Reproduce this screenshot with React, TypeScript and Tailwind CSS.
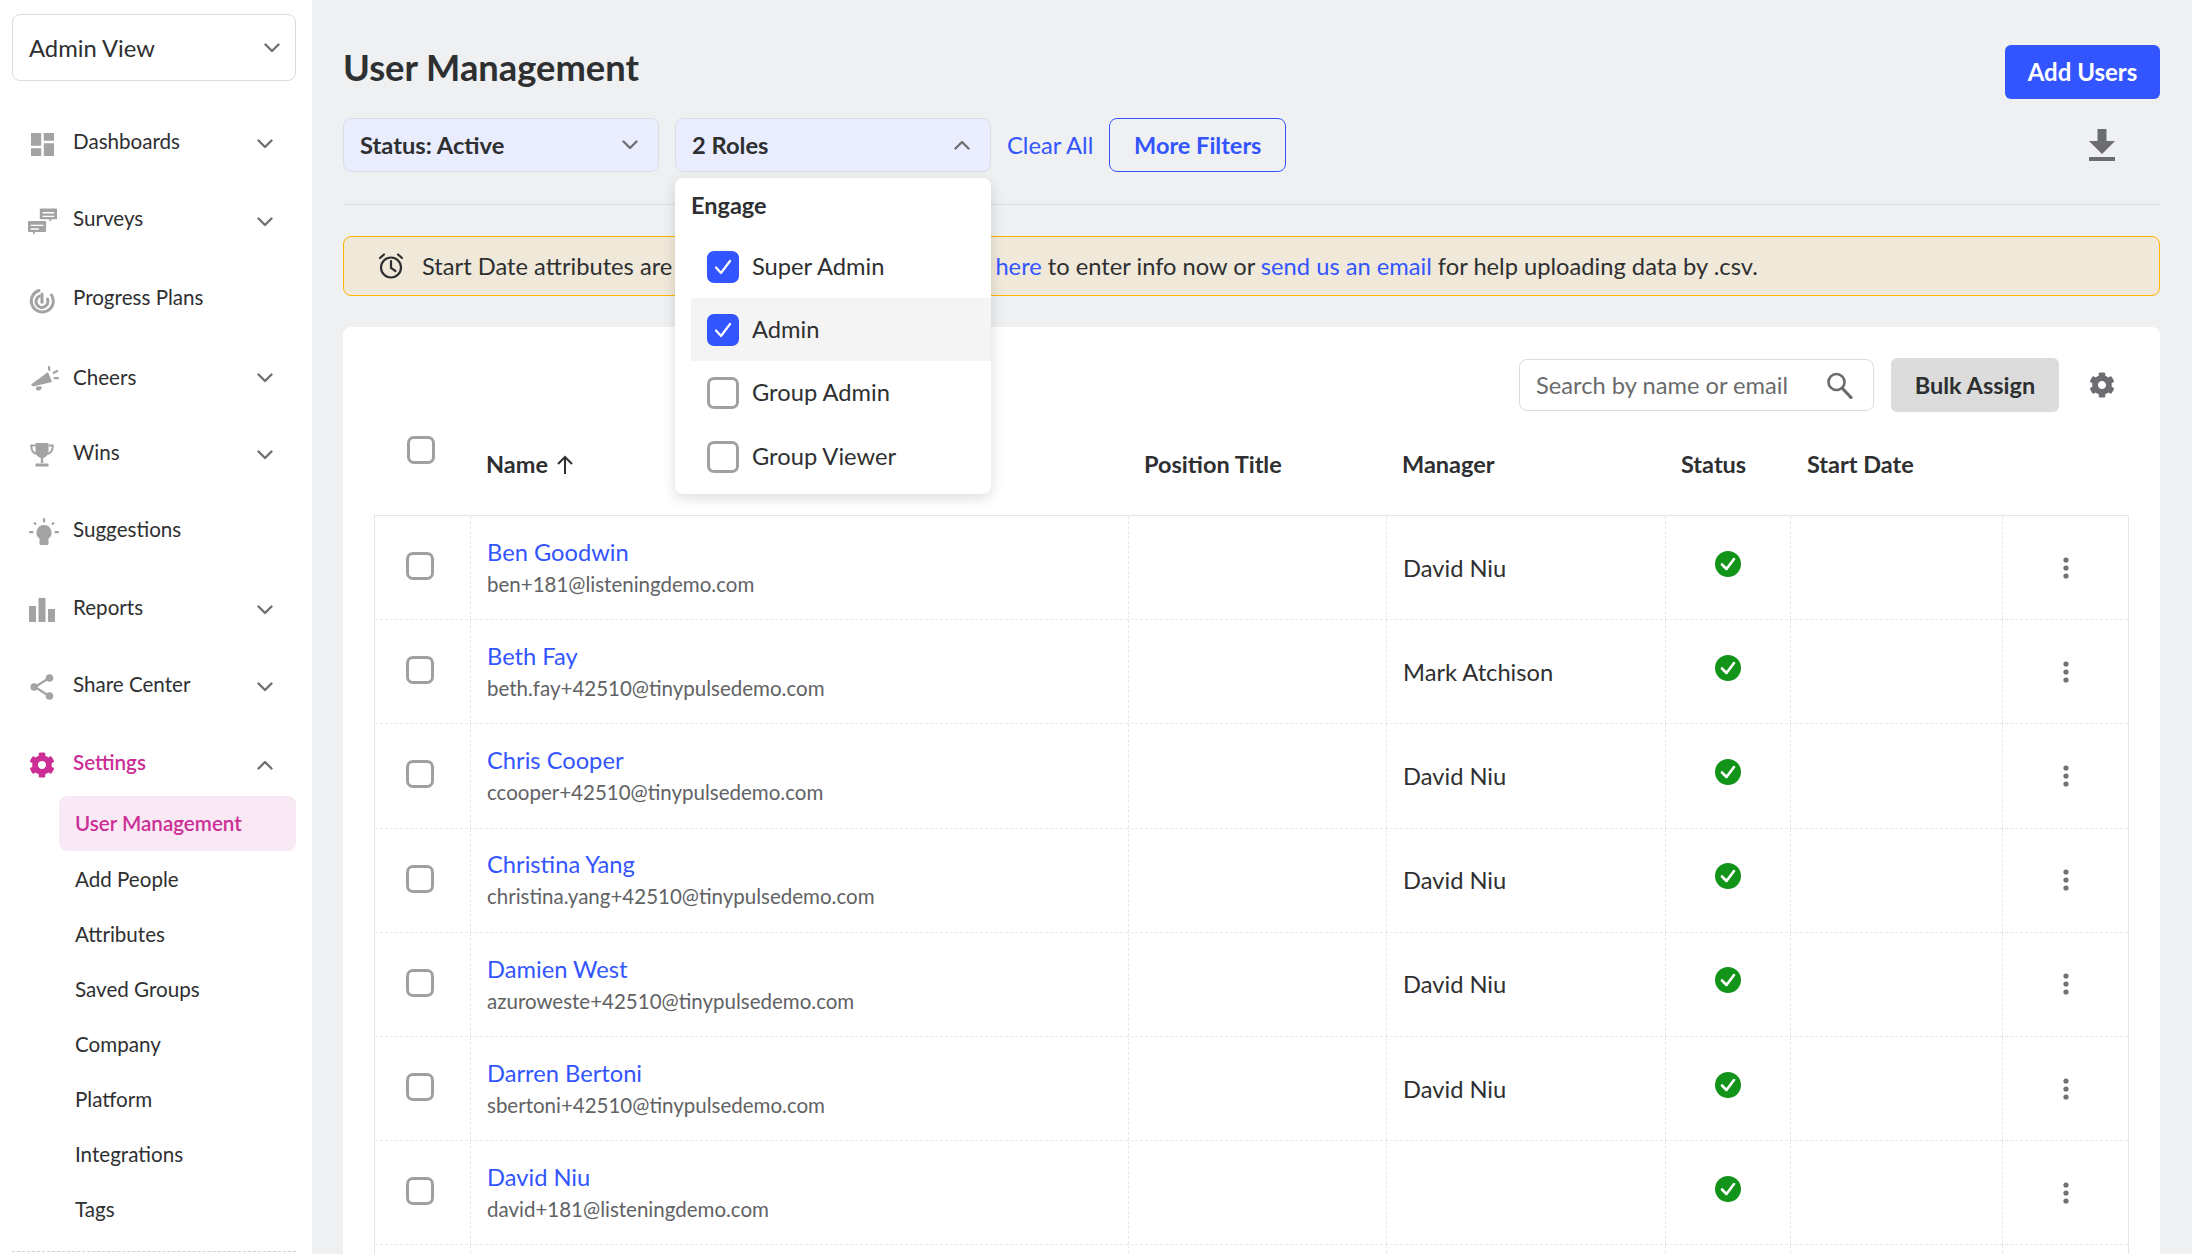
import React from "react";
import { FaCog } from "react-icons/fa";

const Chevron = ({ up = false, className = "" }: { up?: boolean; className?: string }) => (
  <svg viewBox="0 0 16 10" className={className} fill="none" stroke="#6f7072" strokeWidth="2.4" strokeLinecap="round" strokeLinejoin="round">
    {up ? <path d="M1.5 8.5 8 2l6.5 6.5" /> : <path d="M1.5 1.5 8 8l6.5-6.5" />}
  </svg>
);

const G = "#a3a3a3";
const DashboardIcon = () => (
  <svg viewBox="3 3 18 18" className="w-[23px] h-[23px]" fill={G}><path d="M3 13h8V3H3v10zm0 8h8v-6H3v6zm10 0h8V11h-8v10zm0-18v6h8V3h-8z" /></svg>
);
const SurveyIcon = () => (
  <svg viewBox="0 0 32 30" className="w-[32px] h-[30px] ml-[1px]" fill={G}>
    <path fillRule="evenodd" d="M13 1a1 1 0 0 1 1-1h17a1 1 0 0 1 1 1v10a1 1 0 0 1-1 1h-5l-1.5 3-1.500-3H14a1 1 0 0 1-1-1V1zm3 3v1.500h13V4H16zm0 4v1.500h13V8H16z" />
    <path fillRule="evenodd" d="M0 15a1 1 0 0 1 1-1h18a1 1 0 0 1 1 1v10a1 1 0 0 1-1 1H8l-1.500 3L5 26H1a1 1 0 0 1-1-1V15zm3 3v1.500h14V18H3zm0 4v1.500h9V22H3z" />
  </svg>
);
const ProgressIcon = () => (
  <svg viewBox="0 0 26 26" className="w-[26px] h-[26px]" fill="none" stroke={G} strokeWidth="3">
    <path d="M10 2.500A11 11 0 1 0 22.500 7" strokeLinecap="round" />
    <path d="M10.500 8A6 6 0 1 0 18.500 11" strokeLinecap="round" />
    <path d="M13 6v8" strokeLinecap="round" />
    <circle cx="13" cy="14" r="1.500" fill={G} stroke="none" />
  </svg>
);
const CheerIcon = () => (
  <svg viewBox="0 0 30 26" className="w-[30px] h-[26px] ml-[6px] shrink-0" fill={G}>
    <path d="M18 7 22 17 3 21.500 1 19.500z" />
    <path d="M7 21.500h5l-.8 2.500a3 3 0 0 1-5.500-.5z" />
    <rect x="18" y="1" width="2.200" height="5" rx="1" transform="rotate(-8 19 3)" />
    <rect x="22.500" y="6" width="6" height="2.200" rx="1" transform="rotate(-28 25 7)" />
    <rect x="23.500" y="12" width="5.500" height="2.200" rx="1" />
  </svg>
);
const TrophyIcon = () => (
  <svg viewBox="0 0 24 24" className="w-[24px] h-[24px]" fill="none">
    <path d="M5.500 0h13v8.500a6.500 6.500 0 0 1-13 0z" fill={G} />
    <path d="M5.500 2.500H1.200c0 5 1.500 7.500 5.300 8.500M18.500 2.500h4.300c0 5-1.500 7.500-5.300 8.500" stroke={G} strokeWidth="2" />
    <path d="M10.800 14h2.400v6h-2.400z" fill={G} />
    <path d="M5.500 20.500h13V23.500h-13z" fill={G} />
  </svg>
);
const BulbIcon = () => (
  <svg viewBox="0 0 30 30" className="w-[30px] h-[30px] ml-[3px] shrink-0" fill={G}>
    <path d="M15 7a7.500 7.500 0 0 0-4.500 13.500V26a1 1 0 0 0 1 1h7a1 1 0 0 0 1-1v-5.500A7.500 7.500 0 0 0 15 7z" />
    <rect x="14" y="0" width="2.200" height="4.500" rx=".8" />
    <rect x="0" y="13" width="4.500" height="2.200" rx=".8" />
    <rect x="25.500" y="13" width="4.500" height="2.200" rx=".8" />
    <rect x="4.500" y="4.500" width="3" height="2.200" rx=".8" transform="rotate(45 6 5.600)" />
    <rect x="22.500" y="4.500" width="3" height="2.200" rx=".8" transform="rotate(-45 24 5.600)" />
  </svg>
);
const ReportIcon = () => (
  <svg viewBox="0 0 26 24" className="w-[26px] h-[24px]" fill={G}>
    <rect x="0" y="8" width="7" height="16" /><rect x="9.500" y="0" width="7" height="24" /><rect x="19" y="11" width="7" height="13" />
  </svg>
);
const ShareIcon = () => (
  <svg viewBox="0 0 24 26" className="w-[24px] h-[26px]" fill={G}>
    <path d="M19 4 5 13l14 9" fill="none" stroke={G} strokeWidth="2.200" />
    <circle cx="19.500" cy="4" r="3.800" /><circle cx="4.200" cy="13" r="3.800" /><circle cx="19.500" cy="22" r="3.800" />
  </svg>
);

const nav = [
  { label: "Dashboards", icon: <DashboardIcon />, chev: true, h: "h-[78px]", t: "-mt-[6px]" },
  { label: "Surveys", icon: <SurveyIcon />, chev: true, h: "h-[78.5px]", t: "-mt-[7px]" },
  { label: "Progress Plans", icon: <ProgressIcon />, chev: false, h: "h-[78px]", t: "-mt-[7px]" },
  { label: "Cheers", icon: <CheerIcon />, chev: true, h: "h-[77px]", t: "-mt-[2px]" },
  { label: "Wins", icon: <TrophyIcon />, chev: true, h: "h-[77.5px]", t: "-mt-[5.5px]" },
  { label: "Suggestions", icon: <BulbIcon />, chev: false, h: "h-[77.5px]", t: "-mt-[7px]" },
  { label: "Reports", icon: <ReportIcon />, chev: true, h: "h-[77px]", t: "-mt-[5.5px]" },
  { label: "Share Center", icon: <ShareIcon />, chev: true, h: "h-[77.5px]", t: "-mt-[5.5px]" },
];
const sub = ["Add People", "Attributes", "Saved Groups", "Company", "Platform", "Integrations", "Tags"];

const users = [
  ["Ben Goodwin", "ben+181@listeningdemo.com", "David Niu"],
  ["Beth Fay", "beth.fay+42510@tinypulsedemo.com", "Mark Atchison"],
  ["Chris Cooper", "ccooper+42510@tinypulsedemo.com", "David Niu"],
  ["Christina Yang", "christina.yang+42510@tinypulsedemo.com", "David Niu"],
  ["Damien West", "azuroweste+42510@tinypulsedemo.com", "David Niu"],
  ["Darren Bertoni", "sbertoni+42510@tinypulsedemo.com", "David Niu"],
  ["David Niu", "david+181@listeningdemo.com", ""],
];

const Box = ({ className = "" }: { className?: string }) => (
  <span className={"block rounded-[7px] border-[3px] border-[#a0a0a0] bg-white " + className} />
);
const Checked = () => (
  <span className="flex w-[32px] h-[32px] rounded-[7px] bg-[#3355ff] items-center justify-center">
    <svg viewBox="0 0 20 20" className="w-[20px] h-[20px]" fill="none" stroke="white" strokeWidth="2.200" strokeLinecap="round" strokeLinejoin="round"><path d="M3 10.500 8 16l9-12" /></svg>
  </span>
);
const StatusOk = () => (
  <svg viewBox="0 0 26 26" className="w-[26px] h-[26px] -mt-[8px]">
    <circle cx="13" cy="13" r="13" fill="#12941a" />
    <path d="M7 13.500 11.500 18 19 8" fill="none" stroke="white" strokeWidth="2.600" strokeLinecap="round" strokeLinejoin="round" />
  </svg>
);

const cols = "grid grid-cols-[96px_658px_258px_279px_125px_212px_125px]";
const cellB = "border-r border-dashed border-[#e8e8e8] h-full flex items-center";

export default function App() {
  return (
    <div className="flex h-[1254px] w-[2192px] overflow-hidden bg-[#eff0f2] text-[#2e2f31] font-['Lato',sans-serif]">
      <aside className="w-[312px] shrink-0 bg-white pl-[12px] pr-[16px] pt-[14px]">
        <div className="h-[67px] rounded-[8px] border border-[#dcdcdc] flex items-center justify-between pl-[16px] pr-[15px] text-[23.8px]">
          <span className="mt-[3px]">Admin View</span>
          <Chevron className="w-[16px] h-[10px]" />
        </div>
        <nav className="mt-[24px]">
          {nav.map((n) => (
            <div key={n.label} className={"flex items-center pl-[15px] pr-[23px] text-[20.6px] " + n.h}>
              <span className="w-[30px] flex justify-center shrink-0">{n.icon}</span>
              <span className={"ml-[16px] flex-1 " + n.t}>{n.label}</span>
              {n.chev && <Chevron className="w-[16px] h-[10px]" />}
            </div>
          ))}
          <div className="flex items-center pl-[15px] pr-[23px] text-[20.6px] h-[78px] text-[#cc2e96] font-semibold">
            <span className="w-[30px] flex justify-center shrink-0"><FaCog className="w-[26px] h-[26px]" /></span>
            <span className="ml-[16px] flex-1 -mt-[6px]">Settings</span>
            <Chevron up className="w-[16px] h-[10px]" />
          </div>
        </nav>
        <div className="ml-[47px] -mt-[8px]">
          <div className="h-[55px] rounded-[8px] bg-[#f9e9f4] text-[#cc2e96] font-semibold text-[20.6px] flex items-center pl-[16px]"><span>User Management</span></div>
          {sub.map((s) => (
            <div key={s} className="h-[55.1px] text-[20.6px] flex items-center pl-[16px]"><span className="mt-[1px]">{s}</span></div>
          ))}
        </div>
        <div className="mt-[14px] border-b border-dashed border-[#cfcfcf]" />
      </aside>

      <main className="flex-1 min-w-0 pl-[31px] pr-[32px] pt-[45px]">
        <div className="flex items-center justify-between h-[54px]">
          <h1 className="text-[36.3px] font-bold -mt-[10px]">User Management</h1>
          <button className="w-[155px] h-[54px] rounded-[6px] bg-[#3355ff] text-white text-[24px] font-bold">Add Users</button>
        </div>

        <div className="mt-[19px] flex items-center h-[54px]">
          <div className="w-[316px] h-[54px] rounded-[8px] border border-[#d9dde8] bg-[#e9edfd] flex items-center justify-between pl-[16px] pr-[20px] text-[23.7px] font-bold">
            <span className="mt-[1px]">Status: Active</span>
            <Chevron className="w-[16px] h-[10px]" />
          </div>
          <div className="relative ml-[16px]">
            <div className="w-[316px] h-[54px] rounded-[8px] border border-[#d9dde8] bg-[#e9edfd] flex items-center justify-between pl-[16px] pr-[20px] text-[23.7px] font-bold">
              <span className="mt-[1px]">2 Roles</span>
              <Chevron up className="w-[16px] h-[10px]" />
            </div>
            <div className="absolute z-10 left-0 top-[60px] w-[316px] h-[316px] rounded-[8px] bg-white shadow-[0_4px_14px_rgba(0,0,0,0.14)] pl-[16px]">
              <div className="h-[57px] flex items-center text-[23.5px] font-bold"><span className="-mt-[2px]">Engage</span></div>
              <div className="h-[63px] flex items-center pl-[16px] text-[23.7px]"><Checked /><span className="ml-[13px]">Super Admin</span></div>
              <div className="h-[63px] flex items-center pl-[16px] text-[23.7px] bg-[#f4f4f4]"><Checked /><span className="ml-[13px]">Admin</span></div>
              <div className="h-[64px] flex items-center pl-[16px] text-[23.7px]"><Box className="w-[32px] h-[32px]" /><span className="ml-[13px]">Group Admin</span></div>
              <div className="h-[63px] flex items-center pl-[16px] text-[23.7px]"><Box className="w-[32px] h-[32px]" /><span className="ml-[13px]">Group Viewer</span></div>
            </div>
          </div>
          <a className="ml-[16px] text-[23.7px] text-[#3355ff] mt-[1px]">Clear All</a>
          <button className="ml-[16px] w-[177px] h-[54px] rounded-[8px] border border-[#3355ff] text-[#3355ff] text-[23.5px] font-bold"><span className="relative top-[1px]">More Filters</span></button>
          <svg viewBox="0 0 26 32" className="ml-auto mr-[45px] w-[26px] h-[32px]" fill="#6c6d70">
            <path d="M8.500 0h9v12H26L13 25 0 12h8.500z" /><rect x="0" y="28" width="26" height="4" />
          </svg>
        </div>

        <div className="mt-[32px] border-t border-[#dcdde0]" />

        <div className="mt-[31px] h-[60px] rounded-[8px] border border-[#ffb400] bg-[#f0e9da] flex items-center pl-[33px] text-[23.7px]">
          <svg viewBox="0 0 28 28" className="w-[28px] h-[28px] shrink-0" fill="none" stroke="#2e2f31" strokeWidth="2.200" strokeLinecap="round">
            <circle cx="14" cy="15.500" r="10" /><path d="M14 9v7l4.500 3" /><path d="M3 6l4-3.500M25 6l-4-3.500" />
          </svg>
          <span className="ml-[17px] mt-[1px] whitespace-pre">Start Date attributes are <a className="text-[#3355ff] ml-[317px]">here</a> to enter info now or <a className="text-[#3355ff]">send us an email</a> for help uploading data by .csv.</span>
        </div>

        <section className="mt-[31px] rounded-[8px] bg-white pt-[31px] pl-[31px] pr-[31px]">
          <div className="flex items-center justify-end h-[54px]">
            <div className="w-[355px] h-[52px] rounded-[8px] border border-[#dcdcdc] flex items-center justify-between pl-[16px] pr-[20px] text-[23.7px] text-[#6a6b6d]">
              <span className="mt-[1px]">Search by name or email</span>
              <svg viewBox="0 0 28 28" className="w-[28px] h-[28px]" fill="none" stroke="#6a6b6d" strokeWidth="2.600" strokeLinecap="round"><circle cx="11.500" cy="11" r="8" /><path d="M17.500 17.500 26 26.500" strokeWidth="3.200" /></svg>
            </div>
            <button className="ml-[17px] w-[168px] h-[54px] rounded-[6px] bg-[#dcdcdc] text-[23.5px] font-bold"><span className="relative top-[1px]">Bulk Assign</span></button>
            <span className="w-[70px] ml-[8px] -mr-[8px] flex justify-center text-[#6c6d70]"><FaCog className="w-[26px] h-[26px]" /></span>
          </div>
          <div className={cols + " h-[103px] items-center text-[23.5px] font-bold"}>
            <div className="flex justify-center -ml-[3px]"><Box className="w-[28px] h-[28px] mb-[27px]" /></div>
            <div className="pl-[16px] flex items-center pt-[2px]">Name
              <svg viewBox="0 0 20 20" className="w-[20px] h-[20px] ml-[7px]" fill="none" stroke="#2e2f31" strokeWidth="2"><path d="M10 19V2M3 9l7-7 7 7" /></svg>
            </div>
            <div className="pl-[16px] pt-[2px]">Position Title</div>
            <div className="pl-[16px] pt-[2px]">Manager</div>
            <div className="pl-[16px] pt-[2px]">Status</div>
            <div className="pl-[17px] pt-[2px]">Start Date</div>
            <div />
          </div>
          <div className="border border-b-0 border-[#e6e6e6] text-[23.7px]">
            {users.map((u) => (
              <div key={u[0]} className={cols + " h-[104.2px] border-b border-dashed border-[#e8e8e8]"}>
                <div className={cellB + " justify-center"}><Box className="w-[28px] h-[28px] -mt-[3px] -ml-[5px]" /></div>
                <div className={cellB + " pl-[16px] flex-col !items-start justify-center"}>
                  <a className="text-[#3355ff] leading-[28px] pt-[0.5px]">{u[0]}</a>
                  <span className="text-[20.5px] text-[#616264] mt-[4px] leading-[28px]">{u[1]}</span>
                </div>
                <div className={cellB} />
                <div className={cellB + " pl-[16px]"}><span className="mt-[1.5px]">{u[2]}</span></div>
                <div className={cellB + " justify-center"}><StatusOk /></div>
                <div className={cellB} />
                <div className="h-full flex items-center justify-center">
                  <svg viewBox="0 0 6 22" className="w-[6px] h-[22px]" fill="#707173"><circle cx="3" cy="3" r="2.600" /><circle cx="3" cy="11" r="2.600" /><circle cx="3" cy="19" r="2.600" /></svg>
                </div>
              </div>
            ))}
            <div className={cols + " h-[104px]"}>
              <div className={cellB} /><div className={cellB} /><div className={cellB} /><div className={cellB} /><div className={cellB} /><div className={cellB} /><div />
            </div>
          </div>
        </section>
      </main>
    </div>
  );
}
